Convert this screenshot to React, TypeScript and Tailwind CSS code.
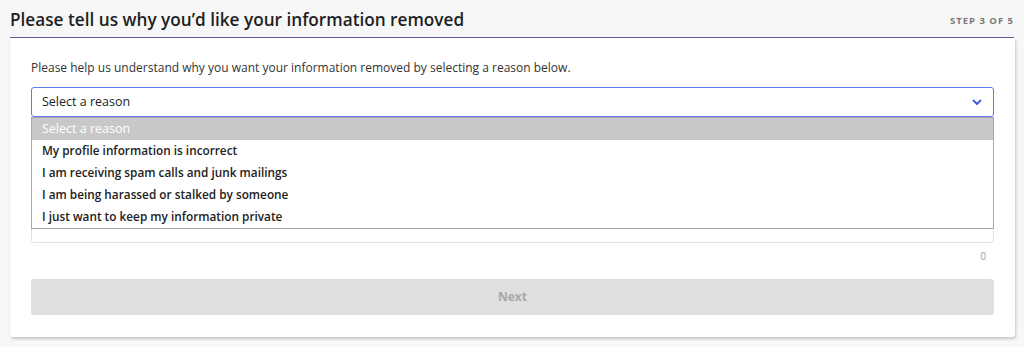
import React from 'react';

// Removal request — step 3 (reason picker, dropdown open)

const reasons = [
  'My profile information is incorrect',
  'I am receiving spam calls and junk mailings',
  'I am being harassed or stalked by someone',
  'I just want to keep my information private',
];

function Chevron() {
  return (
    <svg width="12" height="12" viewBox="0 0 12 12" fill="none">
      <path d="M2.5 4.5 6 8l3.5-3.5" stroke="#3b5bdb" strokeWidth="1.8" strokeLinecap="round" strokeLinejoin="round" />
    </svg>
  );
}

export default function App() {
  return (
    <div
      className="w-[1024px] h-[347px] bg-[#f7f7f7] px-[10px] pt-[8px] text-[#222]"
      style={{ fontFamily: '"Open Sans", "Noto Sans", sans-serif' }}
    >
      {/* Header */}
      <div className="flex items-end justify-between border-b border-[#5b6396] pb-[5px]">
        <h1 className="text-[17.2px] font-semibold leading-[24px] text-[#1f1f1f]">
          Please tell us why you’d like your information removed
        </h1>
        <span className="text-[9.5px] font-bold tracking-[1px] text-[#7a7a7a] mb-[4px]">STEP 3 OF 5</span>
      </div>

      {/* Card */}
      <div className="bg-white shadow-[1px_2px_3px_rgba(0,0,0,0.2)] rounded-b-[3px] px-[21px] pt-[21px] pb-[22px] mr-[-1px]">
        <p className="text-[12px] leading-[18px] text-[#333]">
          Please help us understand why you want your information removed by selecting a reason below.
        </p>

        <div className="relative mt-[10px]">
          <div className="flex items-center justify-between h-[30px] border border-[#5b7cf0] rounded-[3px] pl-[10px] pr-[10px] text-[12.5px] text-[#222]">
            <span>Select a reason</span>
            <Chevron />
          </div>

          {/* Open option list */}
          <div className="absolute left-0 right-0 top-[30px] z-10 bg-white border border-[#a8a8a8] text-[11.8px] font-semibold text-[#222]">
            <div className="h-[22px] flex items-center pl-[10px] bg-[#c8c8c8] text-white font-normal text-[12.5px]">Select a reason</div>
            {reasons.map((r) => (
              <div key={r} className="h-[22px] flex items-center pl-[10px]">
                {r}
              </div>
            ))}
          </div>

          {/* Details textarea (mostly hidden behind the list) */}
          <div className="mt-[6px] h-[120px] border border-[#e2e2e2] rounded-[3px]" />
        </div>

        <div className="flex justify-end pr-[8px] mt-[6px] text-[10px] text-[#9aa0a6] leading-[14px]">0</div>

        <button className="mt-[16px] w-full h-[36px] rounded-[3px] bg-[#dfdfdf] text-[12px] font-bold text-[#a8a8a8]">
          Next
        </button>
      </div>
    </div>
  );
}
